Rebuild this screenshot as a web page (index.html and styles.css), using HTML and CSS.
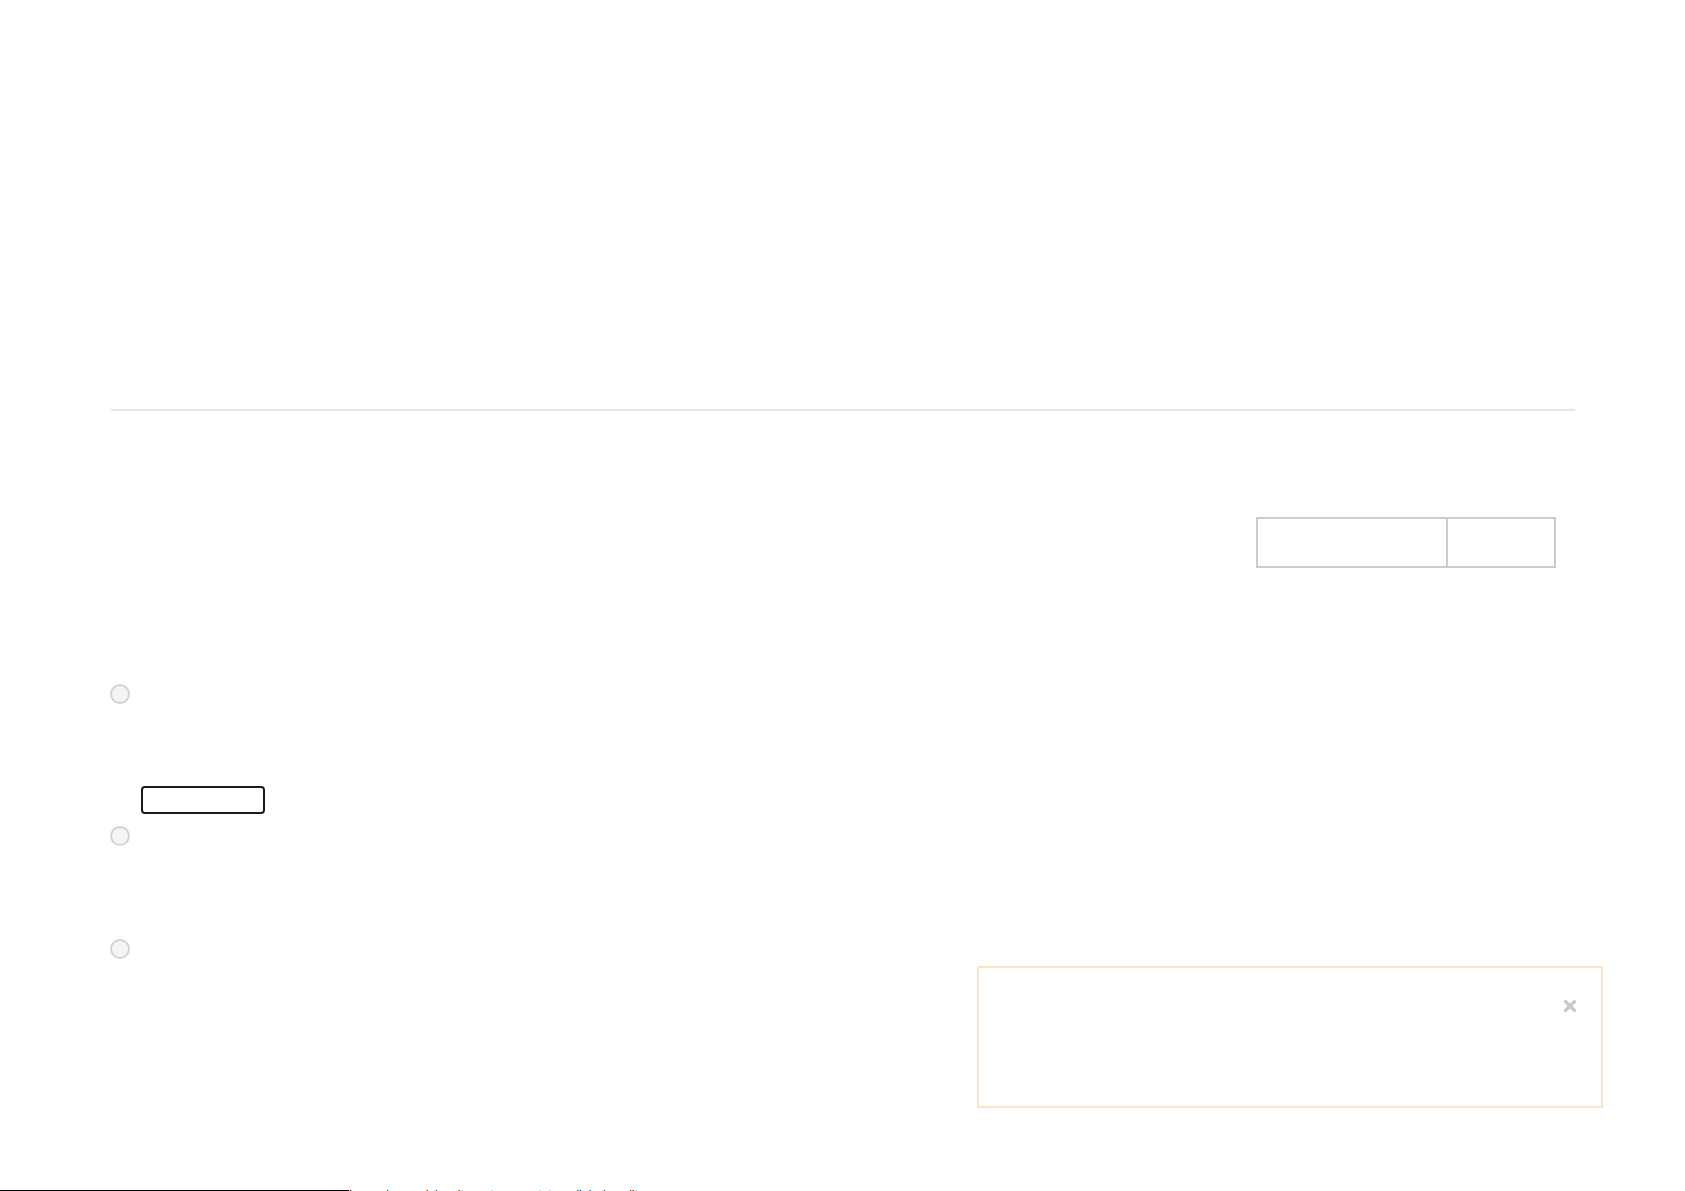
FILE: index.html
```html
<!DOCTYPE html>
<html lang="en">
<head>
<meta charset="utf-8">
<title>Page</title>
<link rel="stylesheet" href="styles.css">
</head>
<body>
<div class="page">
  <header class="masthead"></header>
  <hr class="divider">
  <div class="toolbar">
    <div class="search">
      <input class="search-input" type="text" aria-label="Search">
      <button class="search-btn" type="button" aria-label="Search"></button>
    </div>
  </div>
  <div class="options">
    <label class="option option-first"><input class="radio" type="radio" name="opt"></label>
    <button class="action" type="button" aria-label="Action"></button>
    <label class="option option-second"><input class="radio" type="radio" name="opt"></label>
    <label class="option option-third"><input class="radio" type="radio" name="opt"></label>
  </div>
</div>
<footer class="footer">
  <span class="footer-rule"></span>
  <span class="footer-note">Lorem ipsum dolor sit amet, consectetur adipiscing elit</span>
</footer>
<div class="toast" role="status">
  <button class="toast-close" type="button" aria-label="Close">
    <svg width="16" height="16" viewBox="0 0 16 16" aria-hidden="true">
      <path d="M2.5 2.5 L13.5 13.5 M13.5 2.5 L2.5 13.5" stroke="#c9c9c9" stroke-width="3.4" stroke-linecap="butt"/>
    </svg>
  </button>
</div>
</body>
</html>
```
FILE: styles.css
```css
html, body {
  margin: 0;
  padding: 0;
  background: #ffffff;
  font-family: "Liberation Sans", Arial, sans-serif;
  color: #222;
}

.page {
  width: 1465px;
  padding-left: 110px;
}

.masthead {
  height: 409px;
}

.divider {
  margin: 0 0 0 1px;
  width: 1464px;
  height: 2px;
  border: 0;
  background: #e6e6e6;
}

.toolbar {
  display: flex;
  justify-content: flex-end;
  margin-top: 106px;
  padding-right: 19px;
}

.search {
  display: flex;
  height: 51px;
}

.search-input {
  box-sizing: border-box;
  width: 192px;
  height: 51px;
  margin: 0;
  border: 2px solid #cccccc;
  background: #fff;
  outline: none;
  padding: 0 10px;
}

.search-btn {
  box-sizing: border-box;
  width: 108px;
  height: 51px;
  margin: 0;
  border: 2px solid #cccccc;
  border-left: 0;
  background: #fff;
  padding: 0;
}

.options {
  display: flex;
  flex-direction: column;
  align-items: flex-start;
}

.option {
  display: flex;
  align-items: center;
}

.option-first { margin-top: 116px; }
.option-second { margin-top: 12px; }
.option-third { margin-top: 93px; }

.radio {
  appearance: none;
  -webkit-appearance: none;
  box-sizing: border-box;
  width: 20px;
  height: 20px;
  margin: 0;
  border: 2px solid #d3d3d3;
  border-radius: 50%;
  background: #f4f4f4;
}

.action {
  box-sizing: border-box;
  width: 124px;
  height: 28px;
  margin: 82px 0 0 31px;
  border: 2px solid #1a1a1a;
  border-radius: 4px;
  background: #fff;
  padding: 0;
}

.footer {
  display: flex;
  align-items: flex-start;
  margin-top: 231px;
  height: 20px;
}

.footer-rule {
  width: 349px;
  height: 1px;
  background: #000;
  flex: none;
}

.footer-note {
  font-size: 12px;
  line-height: 14px;
  margin-top: -2px;
  color: #111;
  white-space: nowrap;
}

.toast {
  position: fixed;
  right: 82px;
  bottom: 83px;
  box-sizing: border-box;
  width: 626px;
  height: 142px;
  border: 2px solid #f7e6c3;
  background: #fff;
}

.toast-close {
  position: absolute;
  top: 30px;
  right: 23px;
  width: 16px;
  height: 16px;
  padding: 0;
  margin: 0;
  border: 0;
  background: transparent;
  display: flex;
}
```
